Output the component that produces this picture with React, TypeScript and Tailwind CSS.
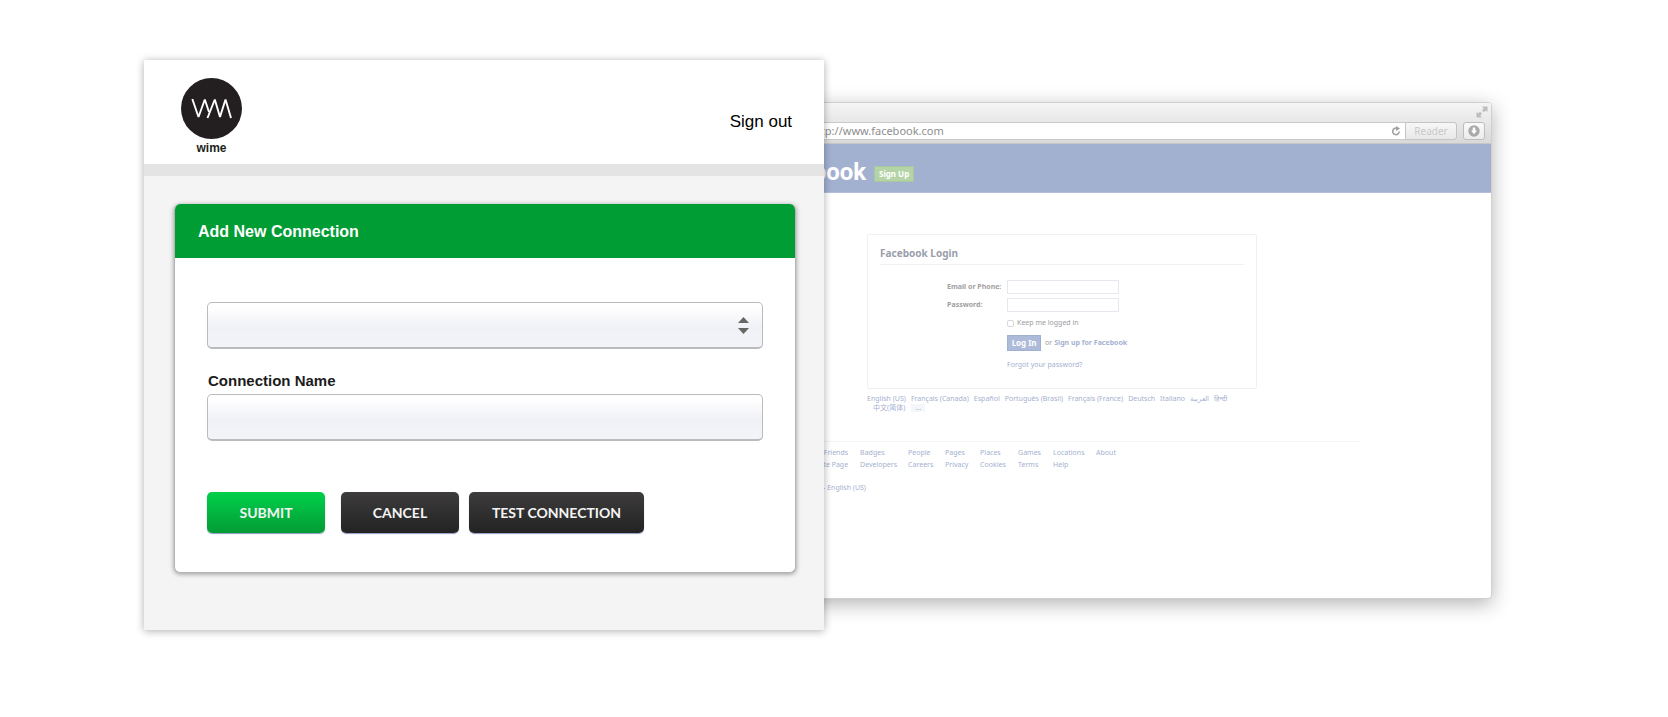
import React from "react";

const languages = [
  "English (US)",
  "Français (Canada)",
  "Español",
  "Português (Brasil)",
  "Français (France)",
  "Deutsch",
  "Italiano",
  "العربية",
  "हिन्दी",
];

const footerColumns = [
  { links: ["Find Friends", "Create Page"], width: "w-14 items-end pr-3" },
  { links: ["Badges", "Developers"], width: "w-12" },
  { links: ["People", "Careers"], width: "w-[37px]" },
  { links: ["Pages", "Privacy"], width: "w-[35px]" },
  { links: ["Places", "Cookies"], width: "w-[38px]" },
  { links: ["Games", "Terms"], width: "w-[35px]" },
  { links: ["Locations", "Help"], width: "w-[43px]" },
  { links: ["About"], width: "w-10" },
];

const fieldStyle =
  "w-full h-[47px] px-4 rounded-[5px] border border-b-2 border-[#b9bbbd] bg-linear-to-b from-white from-10% via-[#f0f1f6] via-55% to-[#f3f4f8] text-base";

const buttonStyle =
  "h-[41px] rounded-[5px] text-[#f4f4f4] text-sm font-bold font-[Lato,sans-serif] shadow-[0_1px_1px_#8f9bc4]";

const darkButton = "bg-linear-to-b from-[#3e3c3d] to-[#232323]";

function Logo() {
  return (
    <div className="flex flex-col items-center w-[61px]">
      <svg className="w-[61px] h-[61px]" viewBox="0 0 61 61" aria-hidden="true">
        <circle cx="30.5" cy="30.5" r="30.5" fill="#231f20" />
        <g fill="none" stroke="#fff" strokeWidth="1.9" strokeLinejoin="bevel">
          <path d="M11.300 21 L17.500 39 L23.800 21.500 L28 34" />
          <path d="M26.500 40 L33.800 21.500 L39 39 L44.500 21.500 L50 40" />
        </g>
      </svg>
      <span className="mt-[3px] text-xs leading-3 font-bold text-[#231f20]">
        wime
      </span>
    </div>
  );
}

function ConnectionPanel() {
  return (
    <section className="relative z-10 flex-[682] min-w-0 h-[570px] mt-[60px] bg-[#f4f4f4] shadow-[0_1px_8px_rgba(0,0,0,0.32)]">
      <header className="flex justify-between items-start h-[116px] pt-[18px] pl-[37px] pr-8 bg-white border-b-[12px] border-[#e4e4e4]">
        <Logo />
        <a href="#" className="mt-8 text-[17px] leading-6 text-black">
          Sign out
        </a>
      </header>
      <div className="mt-7 ml-[30px] mr-7 h-[369px] rounded-md bg-white border border-[#b4b4b4] border-t-0 shadow-[0_1px_5px_rgba(0,0,0,0.4)] overflow-hidden">
        <h1 className="flex items-center h-[54px] px-[23px] pt-px bg-[#009c34] text-white text-base font-bold">
          Add New Connection
        </h1>
        <form className="px-8 pt-11">
          <div className="relative">
            <select
              aria-label="Connection type"
              className={`${fieldStyle} block appearance-none`}
            >
              <option></option>
            </select>
            <svg
              className="absolute right-[14px] top-[15px] w-[11px] h-[17px] pointer-events-none"
              viewBox="0 0 11 17"
              fill="#666"
              aria-hidden="true"
            >
              <path d="M5.500 0 L11 6 H0 Z M0 11 H11 L5.500 17 Z" />
            </svg>
          </div>
          <label
            htmlFor="connection-name"
            className="block mt-5 mb-px ml-px leading-6 text-[15px] font-bold text-[#1c1c1c]"
          >
            Connection Name
          </label>
          <input id="connection-name" type="text" className={`${fieldStyle} block`} />
          <div className="flex mt-[51px]">
            <button
              type="submit"
              className={`${buttonStyle} w-[118px] bg-linear-to-b from-[#00d04b] to-[#039c35]`}
            >
              SUBMIT
            </button>
            <button
              type="button"
              className={`${buttonStyle} ${darkButton} w-[118px] ml-4`}
            >
              CANCEL
            </button>
            <button
              type="button"
              className={`${buttonStyle} ${darkButton} w-[175px] ml-[10px]`}
            >
              TEST CONNECTION
            </button>
          </div>
        </form>
      </div>
    </section>
  );
}

function Toolbar() {
  return (
    <div className="h-[41px] bg-linear-to-b from-[#f5f5f5] to-[#d9d9d9] border-b border-[#c6c6c6]">
      <div className="flex justify-end h-[19px] pt-[3px] pr-[3px]">
        <svg className="w-3 h-3" viewBox="0 0 12 12" fill="#bdbdbd" aria-hidden="true">
          <path d="M6 .5 H11.500 V6 L9.800 4.500 L8 6.300 L6 4.300 L7.800 2.500 Z M6 11.500 H.5 V6 L2.200 7.500 L4 5.700 L6 7.700 L4.200 9.500 Z" />
        </svg>
      </div>
      <div className="flex h-[18px] pl-16 pr-[6px]">
        <input
          aria-label="Address"
          defaultValue="http://www.facebook.com"
          className="flex-1 min-w-0 h-[18px] pb-[2px] bg-white border-t border-b border-[#c9c9c9] font-['Noto_Sans',sans-serif] text-[11px] text-[#8d8d8d]"
        />
        <button
          type="button"
          aria-label="Reload"
          className="flex items-center w-[19px] bg-white border-t border-b border-[#c9c9c9]"
        >
          <svg className="w-[10px] h-[10px] ml-[5px]" viewBox="0 0 10 10" aria-hidden="true">
            <path
              d="M6 2.200 A3.300 3.300 0 1 0 8.300 5.500"
              fill="none"
              stroke="#a0a0a0"
              strokeWidth="1.5"
            />
            <path d="M5 0 L9 2.500 L5 5 Z" fill="#a0a0a0" />
          </svg>
        </button>
        <button
          type="button"
          className="w-[52px] rounded-r-[3px] border border-[#c4c4c4] bg-linear-to-b from-[#f7f7f7] to-[#e8e8e8] font-['Noto_Sans',sans-serif] text-[10px] leading-4 text-[#c8c8c8]"
        >
          Reader
        </button>
        <button
          type="button"
          aria-label="Downloads"
          className="flex items-center justify-center w-[22px] ml-[6px] rounded-[3px] border border-[#bdbdbd] bg-linear-to-b from-[#fafafa] to-[#ececec]"
        >
          <svg className="w-3 h-3" viewBox="0 0 12 12" aria-hidden="true">
            <circle cx="6" cy="6" r="5.700" fill="#a9a9a9" />
            <path d="M4.700 2.500 H7.300 V5.500 H9 L6 9.200 L3 5.500 H4.700 Z" fill="#fff" />
          </svg>
        </button>
      </div>
    </div>
  );
}

function LoginCard() {
  return (
    <form className="w-[390px] h-[155px] px-3 pt-3 border border-[#f0f0f0] rounded-xs">
      <h2 className="h-[18px] text-[10px] leading-3 font-bold text-[#999eab] border-b border-[#f0f0f3]">
        Facebook Login
      </h2>
      <div className="grid grid-cols-[60px_1fr] ml-[67px] mt-[15px] gap-y-1 items-center text-[#a0a0a0]">
        <label htmlFor="email" className="font-bold">
          Email or Phone:
        </label>
        <input id="email" type="text" className="w-28 h-[14px] border border-[#e6e8f0]" />
        <label htmlFor="password" className="font-bold">
          Password:
        </label>
        <input
          id="password"
          type="password"
          className="w-28 h-[14px] border border-[#e6e8f0]"
        />
      </div>
      <div className="ml-[127px] text-[#9c9c9c]">
        <div className="flex items-center gap-[3px] mt-[6px] h-[10px]">
          <input
            id="keep"
            type="checkbox"
            className="appearance-none w-[7px] h-[7px] border border-[#d8d8d8] rounded-[2px]"
          />
          <label htmlFor="keep">Keep me logged in</label>
        </div>
        <div className="flex items-center mt-[7px] h-4">
          <button
            type="submit"
            className="w-[34px] h-4 mr-1 bg-[#adbad9] border border-[#a1afd1] text-white text-[8px] leading-3 font-bold"
          >
            Log In
          </button>
          <span>or</span>
          <a href="#" className="ml-[2px] font-bold text-[#a5b1d0]">
            Sign up for Facebook
          </a>
        </div>
        <a href="#" className="block mt-[9px] text-[#a5b1d0]">
          Forgot your password?
        </a>
      </div>
    </form>
  );
}

function BrowserWindow() {
  return (
    <section className="flex-[747] min-w-0 h-[497px] mt-[102px] -ml-20 pl-px rounded-sm bg-white border border-[#d0d0d0] shadow-[0_5px_20px_rgba(0,0,0,0.3)] overflow-hidden font-['Noto_Sans','Noto_Sans_CJK_SC',sans-serif] text-[7px] leading-[10px]">
      <Toolbar />
      <header className="flex items-end h-[49px] pl-4 pb-[10px] bg-[#a3b1d1] border-b border-[#b4bfd9]">
        <span className="w-[104px] text-right text-white text-2xl leading-5 font-bold font-[Roboto,sans-serif]">
          facebook
        </span>
        <button
          type="button"
          className="w-10 h-4 ml-2 bg-[#b4d4a8] border border-[#a8c79f] text-white text-[8px] leading-3 font-bold"
        >
          Sign Up
        </button>
      </header>
      <div className="pl-[121px] pt-[41px]">
        <LoginCard />
        <div className="flex gap-[5px] mt-[5px] text-[#a5b1d0]">
          {languages.map((language) => (
            <a key={language} href="#">
              {language}
            </a>
          ))}
        </div>
        <div className="flex gap-[6px] h-2 leading-2 pl-[6px] text-[#a5b1d0]">
          <a href="#">中文(简体)</a>
          <a href="#" className="w-[14px] text-center bg-[#f5f6fa]">
            ...
          </a>
        </div>
      </div>
      <footer className="mt-[29px] mr-[131px] pl-[58px] pt-[6px] border-t border-[#f4f4f4] text-[#a5b1d0]">
        <nav className="flex">
          {footerColumns.map((column) => (
            <div
              key={column.links[0]}
              className={`flex flex-col gap-[2px] shrink-0 whitespace-nowrap ${column.width}`}
            >
              {column.links.map((link) => (
                <a key={link} href="#">
                  {link}
                </a>
              ))}
            </div>
          ))}
        </nav>
        <p className="mt-[13px] pl-[19px]">- English (US)</p>
      </footer>
    </section>
  );
}

export default function App() {
  return (
    <main className="flex items-start min-h-screen pl-36 pr-44 bg-white font-['Liberation_Sans',Arial,sans-serif]">
      <ConnectionPanel />
      <BrowserWindow />
    </main>
  );
}
